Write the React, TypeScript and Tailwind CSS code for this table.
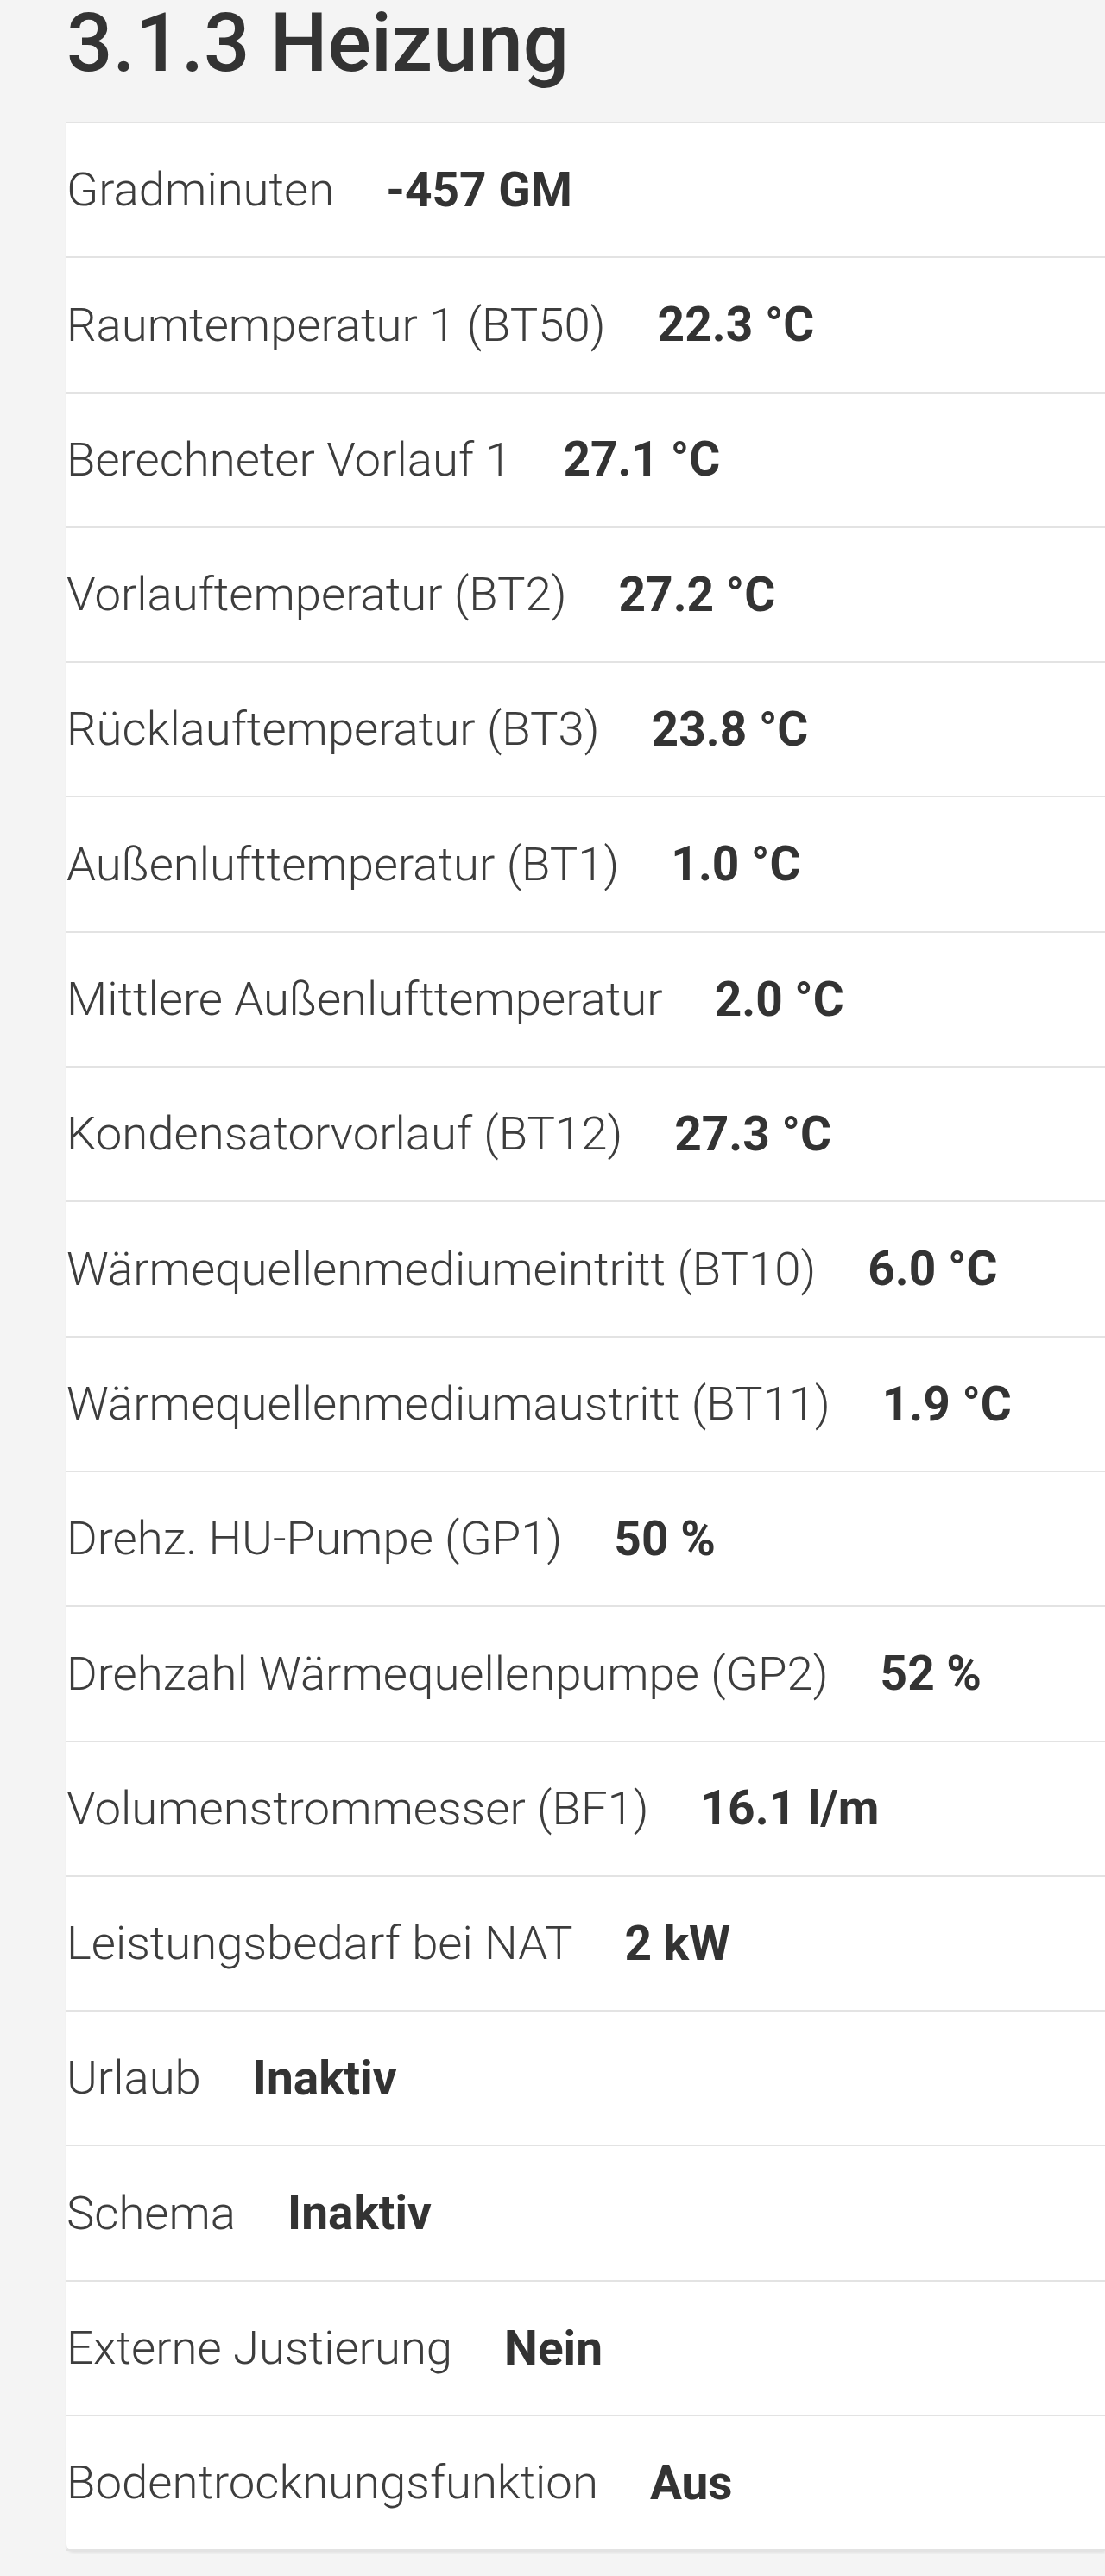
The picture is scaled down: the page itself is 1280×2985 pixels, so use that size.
import React from 'react';

type Reading = {
  label: string;
  value: string;
};

const readings: Reading[] = [
  { label: 'Gradminuten', value: '-457 GM' },
  { label: 'Raumtemperatur 1 (BT50)', value: '22.3 °C' },
  { label: 'Berechneter Vorlauf 1', value: '27.1 °C' },
  { label: 'Vorlauftemperatur (BT2)', value: '27.2 °C' },
  { label: 'Rücklauftemperatur (BT3)', value: '23.8 °C' },
  { label: 'Außenlufttemperatur (BT1)', value: '1.0 °C' },
  { label: 'Mittlere Außenlufttemperatur', value: '2.0 °C' },
  { label: 'Kondensatorvorlauf (BT12)', value: '27.3 °C' },
  { label: 'Wärmequellenmediumeintritt (BT10)', value: '6.0 °C' },
  { label: 'Wärmequellenmediumaustritt (BT11)', value: '1.9 °C' },
  { label: 'Drehz. HU-Pumpe (GP1)', value: '50 %' },
  { label: 'Drehzahl Wärmequellenpumpe (GP2)', value: '52 %' },
  { label: 'Volumenstrommesser (BF1)', value: '16.1 l/m' },
  { label: 'Leistungsbedarf bei NAT', value: '2 kW' },
  { label: 'Urlaub', value: 'Inaktiv' },
  { label: 'Schema', value: 'Inaktiv' },
  { label: 'Externe Justierung', value: 'Nein' },
  { label: 'Bodentrocknungsfunktion', value: 'Aus' },
];

const App: React.FC = () => {
  return (
    <div className="min-h-[2985px] bg-[#f4f4f4] pl-[77px] pt-[3px] font-['Roboto',sans-serif] overflow-hidden">
      <h1 className="text-[94px] leading-none font-medium text-[#333333] whitespace-nowrap">
        3.1.3 Heizung
      </h1>
      <div className="mt-[44px] bg-white border-t-2 border-[#e3e3e3] rounded-bl-lg shadow-[0_2px_3px_rgba(0,0,0,0.08)]">
        {readings.map((item, index) => (
          <div
            key={index}
            className="h-[156.3px] flex items-center border-b-2 border-[#e3e3e3] whitespace-nowrap"
          >
            <span className="text-[54.5px] font-light text-[#3d3d3d]">{item.label}</span>
            <span className="ml-[60px] text-[55px] font-bold text-[#333333]">{item.value}</span>
          </div>
        ))}
      </div>
    </div>
  );
};

export default App;
